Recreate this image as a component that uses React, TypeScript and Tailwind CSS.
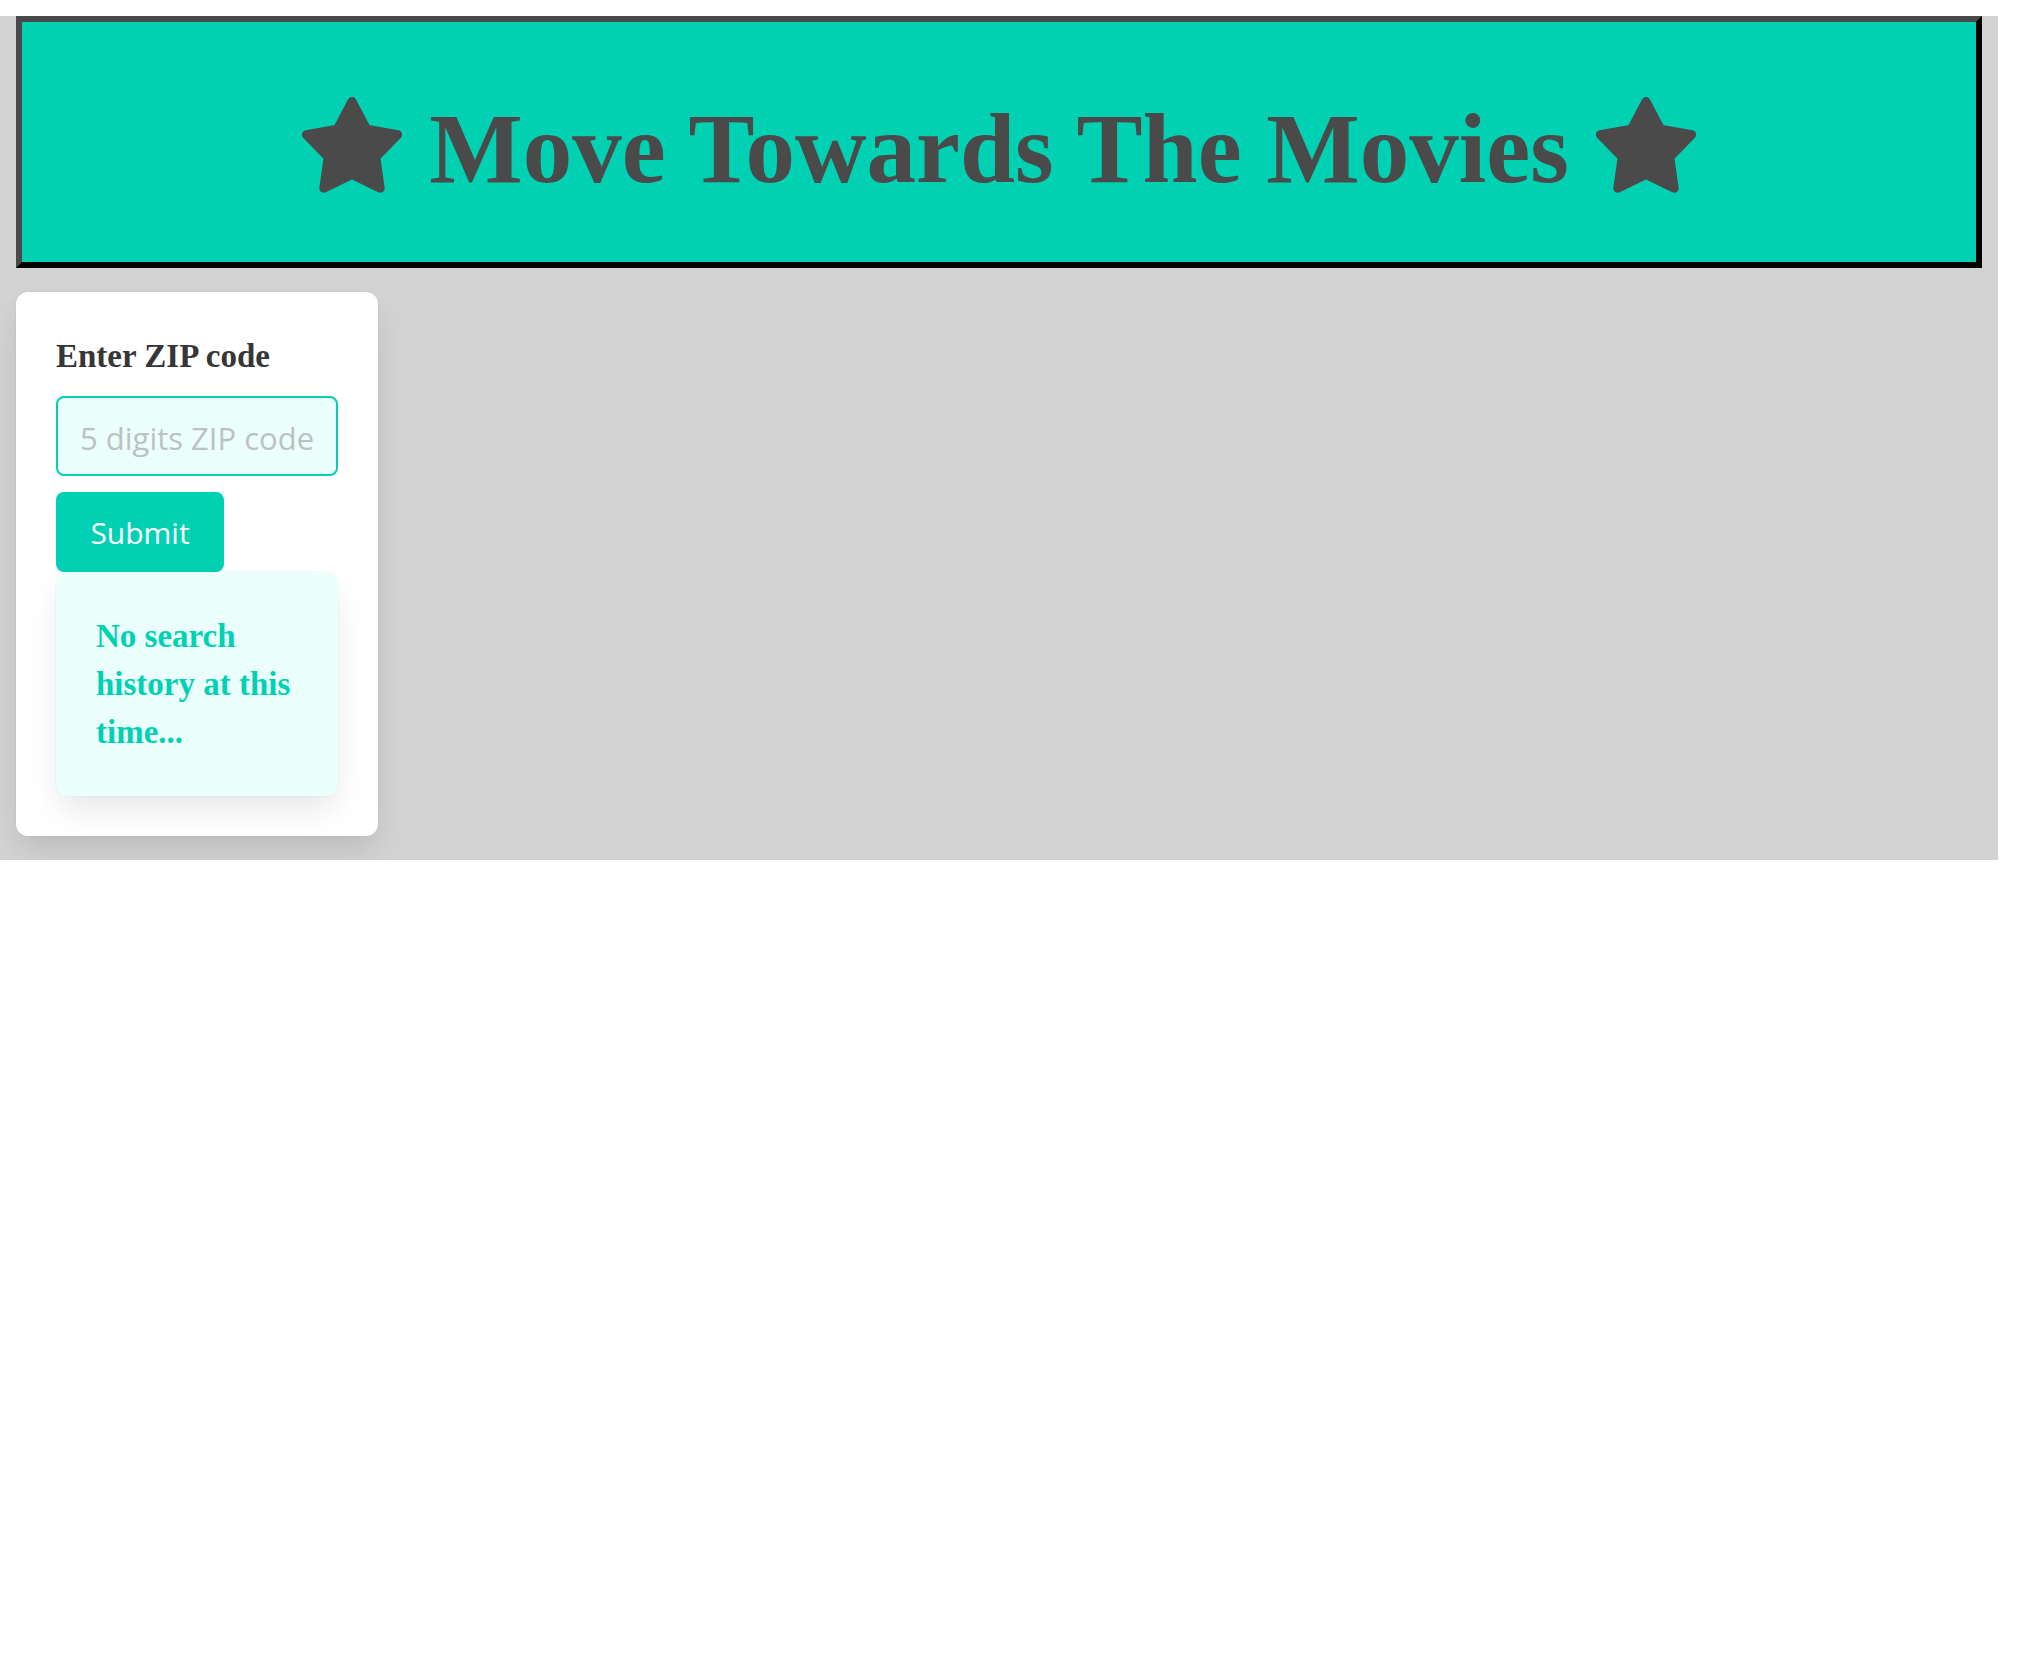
function Star() {
  return (
    <svg width="100" height="96" viewBox="0 0 100 96" className="mb-[6px] shrink-0">
      <polygon
        points="50,4.5 64.69,32.27 95.65,37.67 73.78,60.23 78.21,91.33 50,77.5 21.79,91.33 26.22,60.23 4.35,37.67 35.31,32.27"
        fill="#4a4a4a"
        stroke="#4a4a4a"
        strokeWidth="9"
        strokeLinejoin="round"
      />
    </svg>
  );
}

export default function App() {
  return (
    <div className="mt-4 w-[1998px] bg-[#d3d3d3] px-4 pb-6">
      <header className="h-[252px] border-[6px] border-t-[#4a4a4a] border-l-[#4a4a4a] border-b-black border-r-black bg-[#00d1b2]">
        <div className="flex h-full items-center justify-center gap-[27px] pt-[12px]">
          <Star />
          <h1 className="font-['Liberation_Serif',serif] text-[99px] font-bold leading-none text-[#4a4a4a]">
            Move Towards The Movies
          </h1>
          <Star />
        </div>
      </header>

      <div className="mt-6 w-[362px] rounded-[12px] bg-white p-10 shadow-[0_16px_32px_-4px_rgba(10,10,10,0.12),0_0_0_1px_rgba(10,10,10,0.02)]">
        <label className="block font-['Liberation_Serif',serif] text-[33px] font-bold leading-[48px] text-[#363636]">
          Enter ZIP code
        </label>
        <input
          type="text"
          placeholder="5 digits ZIP code"
          className="mt-4 block h-[80px] w-full rounded-[8px] border-2 border-[#00d1b2] bg-[#ebfffc] px-[22px] pt-[3px] font-['Open_Sans',sans-serif] text-[31px] text-[#363636] outline-none placeholder:text-[#bcc2c0]"
        />
        <button className="mt-4 flex h-[80px] w-[168px] items-center justify-center rounded-[8px] bg-[#00d1b2] font-['Open_Sans',sans-serif] text-[30px] text-white">
          Submit
        </button>
        <div className="rounded-[12px] bg-[#ebfffc] py-10 pl-10 pr-9 shadow-[0_16px_32px_-4px_rgba(10,10,10,0.1),0_0_0_1px_rgba(10,10,10,0.02)]">
          <p className="font-['Liberation_Serif',serif] text-[33px] font-bold leading-[48px] text-[#00d1b2]">
            No search history at this time...
          </p>
        </div>
      </div>
    </div>
  );
}
